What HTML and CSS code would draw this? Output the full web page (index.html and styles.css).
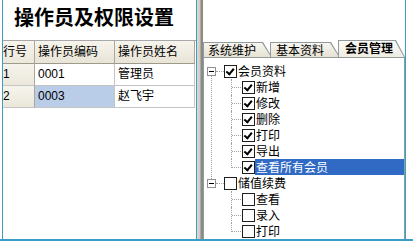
FILE: index.html
```html
<!DOCTYPE html>
<html lang="zh-CN">
<head>
    <meta charset="UTF-8">
    <title>操作员及权限设置</title>
    <link rel="stylesheet" href="styles.css">
</head>
<body>
    <div class="frame">
        <div class="left">
            <h1>操作员及权限设置</h1>
            <div class="grid">
                <div class="row head">
                    <div class="cell num">行号</div>
                    <div class="cell">操作员编码</div>
                    <div class="cell">操作员姓名</div>
                </div>
                <div class="row">
                    <div class="cell num">1</div>
                    <div class="cell">0001</div>
                    <div class="cell">管理员</div>
                </div>
                <div class="row">
                    <div class="cell num">2</div>
                    <div class="cell picked">0003</div>
                    <div class="cell">赵飞宇</div>
                </div>
            </div>
        </div>

        <div class="splitter"></div>

        <div class="right">
            <div class="tabs">
                <div class="tab">系统维护</div>
                <div class="tab">基本资料</div>
                <div class="tab active">会员管理</div>
            </div>
            <div class="sheet">
                <ul class="tree">
                    <li class="node root">
                        <span class="toggle"></span><span class="hline"></span>
                        <span class="check on"></span><span class="label">会员资料</span>
                    </li>
                    <li class="node child">
                        <span class="indent"></span><span class="branch"></span>
                        <span class="check on"></span><span class="label">新增</span>
                    </li>
                    <li class="node child">
                        <span class="indent"></span><span class="branch"></span>
                        <span class="check on"></span><span class="label">修改</span>
                    </li>
                    <li class="node child">
                        <span class="indent"></span><span class="branch"></span>
                        <span class="check on"></span><span class="label">删除</span>
                    </li>
                    <li class="node child">
                        <span class="indent"></span><span class="branch"></span>
                        <span class="check on"></span><span class="label">打印</span>
                    </li>
                    <li class="node child">
                        <span class="indent"></span><span class="branch"></span>
                        <span class="check on"></span><span class="label">导出</span>
                    </li>
                    <li class="node child">
                        <span class="indent"></span><span class="branch last"></span>
                        <span class="check on"></span><span class="label selected">查看所有会员</span>
                    </li>
                    <li class="node root">
                        <span class="toggle"></span><span class="hline"></span>
                        <span class="check"></span><span class="label">储值续费</span>
                    </li>
                    <li class="node child">
                        <span class="indent"></span><span class="branch"></span>
                        <span class="check"></span><span class="label">查看</span>
                    </li>
                    <li class="node child">
                        <span class="indent"></span><span class="branch"></span>
                        <span class="check"></span><span class="label">录入</span>
                    </li>
                    <li class="node child">
                        <span class="indent"></span><span class="branch"></span>
                        <span class="check"></span><span class="label">打印</span>
                    </li>
                </ul>
            </div>
        </div>
    </div>
</body>
</html>
```

FILE: styles.css
```css
body {
    margin: 0;
    width: 413px;
    height: 243px;
    overflow: hidden;
    background-color: #fff;
    font-family: "Liberation Sans", "Noto Sans CJK SC", sans-serif;
    font-size: 12px;
    color: #000;
}
.frame {
    display: flex;
    height: 239px;
    border-bottom: 2px solid #3c9ec4;
}
.left {
    width: 193px;
    margin-left: 2px;
    border-left: 1px solid #3c9ec4;
    border-right: 1px solid #3c9ec4;
}
h1 {
    margin: 0;
    height: 40px;
    padding-left: 11px;
    box-sizing: border-box;
    padding-top: 6px;
    font-family: "Noto Sans CJK SC", sans-serif;
    font-size: 20px;
    line-height: 22px;
    font-weight: bold;
}
.grid {
    border-top: 1px solid #a8a8a8;
}
.row {
    display: grid;
    grid-template-columns: 32px 80px 80px;
    height: 22px;
}
.row.head {
    height: 23px;
}
.cell {
    padding-left: 3px;
    line-height: 21px;
    border-right: 1px solid #c4c4c4;
    border-bottom: 1px solid #c4c4c4;
    white-space: nowrap;
    overflow: hidden;
}
.head .cell {
    line-height: 22px;
    background: linear-gradient(#f6f4ec, #e8e4d6);
    border-right-color: #aca899;
    border-bottom-color: #9d9a8c;
}
.cell.num {
    padding-left: 0;
    background: linear-gradient(#f6f4ec, #ebe7da);
    border-right-color: #aca899;
}
.cell.picked {
    background-color: #b9cde9;
}
.splitter {
    width: 6px;
    background: linear-gradient(to right, #dedad2 0, #cfcbc3 3px, #8e8a82 4px, #8e8a82 6px);
}
.right {
    flex: 1;
    display: flex;
    flex-direction: column;
    padding-top: 40px;
    border-right: 1px solid #3c9ec4;
    margin-right: 7px;
}
.tabs {
    display: flex;
    height: 17px;
    align-items: flex-end;
}
.tab {
    position: relative;
    isolation: isolate;
    height: 15px;
    padding: 0 16px 0 6px;
    margin-right: -2px;
    line-height: 16px;
    font-family: "Noto Sans CJK SC", sans-serif;
    background: #919b9c;
    clip-path: polygon(0 0, calc(100% - 9px) 0, 100% 100%, 0 100%);
}
.tab::before {
    content: "";
    position: absolute;
    left: 1px;
    top: 1px;
    right: 1px;
    bottom: 0;
    background: linear-gradient(#f7f6f0, #e6e2d3);
    clip-path: polygon(0 0, calc(100% - 9px) 0, 100% 100%, 0 100%);
    z-index: -1;
}
.tab:first-child {
    padding-left: 5px;
}
.tab.active {
    height: 17px;
    font-weight: bold;
    margin-right: 0;
    padding: 0 12px 0 7px;
}
.tab.active::before {
    background: linear-gradient(#fbfaf6, #efece2);
}
.sheet {
    flex: 1;
    border: 1px solid #919b9c;
    border-bottom: none;
    background-color: #fff;
}
.tree {
    list-style: none;
    margin: 0;
    padding: 5px 0 0 3px;
    font-family: "Noto Sans CJK SC", sans-serif;
}
.node {
    display: flex;
    align-items: center;
    height: 16px;
    position: relative;
}
.toggle {
    position: relative;
    width: 7px;
    height: 7px;
    border: 1px solid #919191;
    background-color: #fff;
    flex: none;
}
.toggle::after {
    content: "";
    position: absolute;
    left: 1px;
    top: 3px;
    width: 5px;
    height: 1px;
    background-color: #000;
}
.hline {
    width: 8px;
    border-top: 1px dotted #a0a0a0;
    flex: none;
}
.root:first-child::before {
    content: "";
    position: absolute;
    left: 4px;
    top: 12px;
    height: 104px;
    border-left: 1px dotted #a0a0a0;
}
.indent {
    width: 24px;
    height: 16px;
    flex: none;
}
.branch {
    position: relative;
    width: 10px;
    height: 16px;
    margin-right: 1px;
    border-left: 1px dotted #a0a0a0;
    box-sizing: border-box;
    flex: none;
}
.branch::after {
    content: "";
    position: absolute;
    left: 0;
    top: 8px;
    width: 9px;
    border-top: 1px dotted #a0a0a0;
}
.branch.last,
.child:last-child .branch {
    height: 9px;
    align-self: flex-start;
}
.check {
    position: relative;
    width: 11px;
    height: 11px;
    border: 1px solid #1f1f1f;
    background-color: #fff;
    flex: none;
}
.check.on::after {
    content: "";
    position: absolute;
    left: 2px;
    top: 1px;
    width: 3px;
    height: 6px;
    border-right: 2px solid #000;
    border-bottom: 2px solid #000;
    transform: rotate(40deg);
    transform-origin: 60% 60%;
}
.label {
    padding-left: 1px;
    line-height: 16px;
    font-size: 12px;
    white-space: nowrap;
}
.label.selected {
    flex: 1;
    background-color: #316ac5;
    color: #fff;
}
```
